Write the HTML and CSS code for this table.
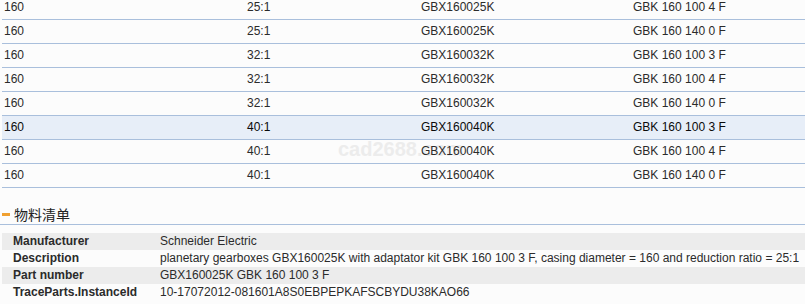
FILE: index.html
```html
<!DOCTYPE html>
<html>
<head>
<meta charset="utf-8">
<link rel="stylesheet" href="styles.css">
</head>
<body>
<div class="page">
  <div class="variants">
    <div class="watermark">cad2688.com</div>
    <div class="row"><div>160</div><div>25:1</div><div>GBX160025K</div><div>GBK 160 100 4 F</div></div>
    <div class="row"><div>160</div><div>25:1</div><div>GBX160025K</div><div>GBK 160 140 0 F</div></div>
    <div class="row"><div>160</div><div>32:1</div><div>GBX160032K</div><div>GBK 160 100 3 F</div></div>
    <div class="row"><div>160</div><div>32:1</div><div>GBX160032K</div><div>GBK 160 100 4 F</div></div>
    <div class="row"><div>160</div><div>32:1</div><div>GBX160032K</div><div>GBK 160 140 0 F</div></div>
    <div class="row current"><div>160</div><div>40:1</div><div>GBX160040K</div><div>GBK 160 100 3 F</div></div>
    <div class="row"><div>160</div><div>40:1</div><div>GBX160040K</div><div>GBK 160 100 4 F</div></div>
    <div class="row"><div>160</div><div>40:1</div><div>GBX160040K</div><div>GBK 160 140 0 F</div></div>
  </div>
  <div class="section-head"><span class="dash"></span><span class="section-title">物料清单</span></div>
  <div class="props">
    <div class="prop alt"><div class="label">Manufacturer</div><div class="value">Schneider Electric</div></div>
    <div class="prop"><div class="label">Description</div><div class="value">planetary gearboxes GBX160025K with adaptator kit GBK 160 100 3 F, casing diameter = 160 and reduction ratio = 25:1</div></div>
    <div class="prop alt"><div class="label">Part number</div><div class="value">GBX160025K GBK 160 100 3 F</div></div>
    <div class="prop"><div class="label">TraceParts.InstanceId</div><div class="value">10-17072012-081601A8S0EBPEPKAFSCBYDU38KAO66</div></div>
  </div>
</div>
</body>
</html>
```
FILE: styles.css
```css
html, body {
  margin: 0;
  padding: 0;
  background: #fcfcfc;
}
body {
  font-family: "Liberation Sans", Arial, sans-serif;
  font-size: 12px;
  color: #2b2b2b;
  overflow: hidden;
}
.page {
  width: 805px;
  margin-top: -4px;
}
.variants {
  position: relative;
  margin-left: 2px;
}
.row {
  position: relative;
  z-index: 1;
  display: grid;
  grid-template-columns: 243px 174px 212px 1fr;
  height: 23px;
  line-height: 23px;
  border-bottom: 1px solid #a9bfdc;
}
.row > div {
  padding-left: 2px;
  white-space: nowrap;
}
.row.current {
  background: #e7eef8;
  color: #0a0a0a;
}
.watermark {
  position: absolute;
  z-index: 0;
  left: 336px;
  top: 142px;
  font-size: 20px;
  font-weight: bold;
  color: #ececec;
  line-height: 23px;
  pointer-events: none;
}
.section-head {
  display: flex;
  align-items: center;
  padding-top: 16px;
  height: 20px;
  border-bottom: 1px solid #a9bfdc;
}
.dash {
  display: inline-block;
  width: 8px;
  height: 3px;
  background: #f0a030;
  margin-left: 2px;
  margin-right: 4px;
}
.section-title {
  font-family: "Noto Sans CJK SC", "Liberation Sans", sans-serif;
  font-size: 14px;
  line-height: 20px;
  color: #222;
}
.props {
  margin: 8px 0 0 2px;
}
.prop {
  display: grid;
  grid-template-columns: 158px 1fr;
  height: 17px;
  line-height: 17px;
  white-space: nowrap;
}
.prop.alt {
  background: #ececec;
}
.label {
  font-weight: bold;
  padding-left: 11px;
}
```
